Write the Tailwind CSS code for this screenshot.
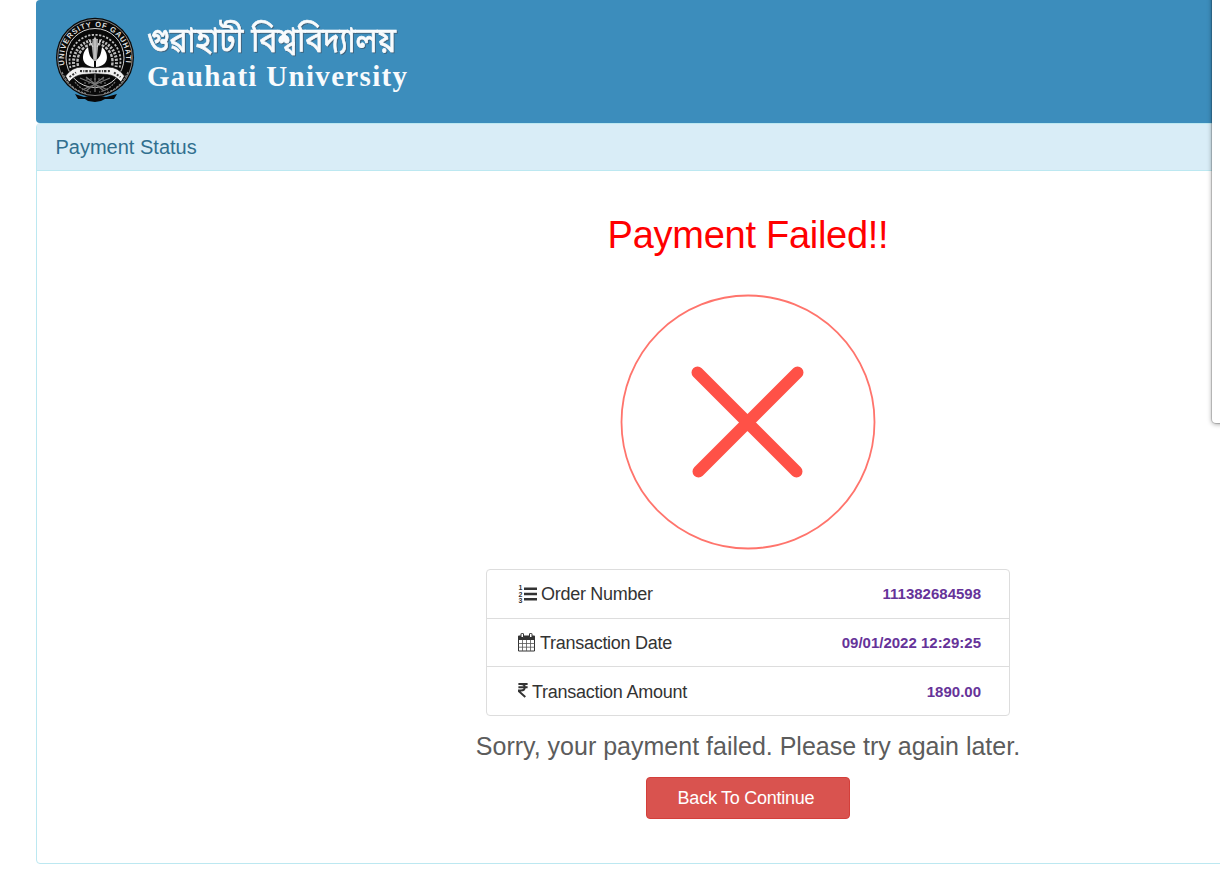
<!DOCTYPE html>
<html lang="en">
<head>
<meta charset="utf-8">
<title>Payment Status</title>
<script src="https://cdn.jsdelivr.net/npm/@tailwindcss/browser@4"></script>
</head>
<body class="h-[874px] overflow-hidden bg-white font-['Liberation_Sans',Arial,sans-serif] text-[#333]">
<div class="relative h-[874px] w-full overflow-hidden">
  <main class="ml-9 flex h-[864px] w-[1424px] flex-col">
    <header class="h-[123px] shrink-0 rounded bg-[#3c8dbc]">
      <svg class="block" width="400" height="123" viewBox="36 0 400 123" role="img" aria-label="Gauhati University">
        <defs>
          <path id="ring" d="M65.200 67 A31 31.500 0 1 1 124.800 67"/>
          <filter id="sh" x="-5%" y="-20%" width="110%" height="150%"><feDropShadow dx="1" dy="1" stdDeviation=".6" flood-color="#405568" flood-opacity=".75"/></filter>
        </defs>
        <path d="M75 94 L84 97 L95 95 L106 97 L117 94 L114 99 L105 99 L101 101 L95 102 L88 101 L85 99 L78 99Z" fill="#080808"/>
        <ellipse cx="95" cy="57.500" rx="39" ry="39.700" fill="#090909"/>
        <ellipse cx="95" cy="57.500" rx="37.300" ry="38" fill="none" stroke="#b6b6b6" stroke-width=".7"/>
        <ellipse cx="95" cy="58" rx="29" ry="29.500" fill="#080808" stroke="#d0d0d0" stroke-width="1"/>
        <text font-family="Liberation Sans, sans-serif" font-weight="700" font-size="7.500" fill="#ddd"><textPath href="#ring" startOffset="2" textLength="109">UNIVERSITY OF GAUHATI</textPath></text>
        <path d="M62 72 Q69 89 86 93.500 M128 72 Q121 89 104 93.500" fill="none" stroke="#8a8a8a" stroke-width="1.200" stroke-dasharray="2.500 1"/>
        <g fill="none" stroke="#bdbdbd">
          <path d="M70.500 68 A25.500 26 0 1 1 119.500 68" stroke-width="1.800" stroke-dasharray="2.200 1.500"/>
          <path d="M74 67 A21.500 22 0 1 1 116 67" stroke-width="3" stroke-dasharray="2 1.300"/>
          <path d="M78 66 A17.500 18 0 1 1 112 66" stroke-width="2.400" stroke-dasharray="3 1.300"/>
        </g>
        <ellipse cx="95" cy="58" rx="14" ry="13" fill="#0b0b0b"/>
        <path d="M88 47 C89 54 90 58 94 60 L94 67 C80 66 81 53 88 47Z M102 47 C101 54 100 58 96 60 L96 67 C110 66 109 53 102 47Z" fill="#fff"/>
        <path d="M95 36 L98.500 44 L96.500 61 L93.500 61 L91.500 44Z" fill="#a5a5a5"/>
        <path d="M88.500 39 L93 47 M101.500 39 L97 47 M95 38v21" stroke="#e0e0e0" fill="none" stroke-width=".9"/>
        <g fill="none" stroke="#777" stroke-width="1.200">
          <path d="M80 78 L108 90 M110 78 L82 90 M95 74 L95 92 M86 77 L104 91 M104 77 L86 91"/>
          <path d="M75 82 Q81 90 91 92 M115 82 Q109 90 99 92" stroke-dasharray="2 1"/>
          <path d="M86 79h18 M84 83h22 M86 87h18" stroke-dasharray="2 2"/>
        </g>
        <path d="M65.500 76 Q72 67 82 67 Q95 68.500 108 67 Q118 67 124.500 76 L121 82 Q115 75 107 74.500 Q95 73 83 74.500 Q75 75 69 82Z" fill="#f1f1f1" stroke="#111" stroke-width=".7"/>
        <path d="M69.500 77 L76 72.500 M114 72.500 L120.500 77" fill="none" stroke="#333" stroke-width="2" stroke-dasharray="2 1.500"/>
        <path d="M80 71 Q95 71.500 110 71" fill="none" stroke="#333" stroke-width="2.200" stroke-dasharray="2 1.300 1 1 2.500 1.500"/>
        <g filter="url(#sh)" fill="#f8fbfd">
          <text transform="translate(147 51.500) scale(1 1.160)" x="0" y="0" font-family="'Noto Sans Bengali', 'Noto Sans', sans-serif" font-size="30" textLength="249" lengthAdjust="spacingAndGlyphs" stroke="#f8fbfd" stroke-width=".6">গুৱাহাটী বিশ্ববিদ্যালয়</text>
        </g>
        <text x="147" y="85.500" font-family="'Liberation Serif', serif" font-weight="700" font-size="29" textLength="260" fill="#f8fbfd">Gauhati University</text>
      </svg>
    </header>
    <section class="flex grow flex-col rounded border border-[#bce8f1]">
      <h1 class="h-[47px] shrink-0 border-b border-[#bce8f1] bg-[#d9edf7] pl-[18.5px] text-[20px] leading-[46px] text-[#31708f]">Payment Status</h1>
      <div class="flex flex-col items-center">
        <h2 class="mt-[42px] text-[38px] leading-[44px] tracking-[-0.27px] text-[#f00]">Payment Failed!!</h2>
        <svg class="mt-[36px] block" width="258" height="258" viewBox="619 293 258 258">
          <circle cx="748" cy="422" r="126.500" fill="none" stroke="#ff5147" stroke-opacity=".8" stroke-width="1.800"/>
          <path d="M697.500 372.500 L796.500 471.500 M797.500 372.500 L698.500 471.500" stroke="#ff5147" stroke-width="12" stroke-linecap="round"/>
        </svg>
        <dl class="mt-[18px] flex h-[147px] w-[524px] flex-col divide-y divide-[#ddd] rounded border border-[#ddd]">
          <div class="flex flex-1 items-center justify-between pr-7 pl-[31px]">
            <dt class="flex items-center pt-0.5 text-[18px] tracking-[-0.28px]">
              <svg class="mr-1" width="19" height="20" viewBox="0 0 19 20" fill="#333"><path d="M6 2.500H19v2.500H6zM6 7.800H19v2.500H6zM6 13H19v2.500H6z"/><g font-family="Liberation Sans, sans-serif" font-weight="700" font-size="7"><text x="0.500" y="5">1</text><text x="0.500" y="11.500">2</text><text x="0.500" y="18">3</text></g></svg>
              Order Number</dt>
            <dd class="text-[15px] font-bold text-[#663399]">111382684598</dd>
          </div>
          <div class="flex flex-1 items-center justify-between pr-7 pl-[31px]">
            <dt class="flex items-center pt-px text-[18px] tracking-[-0.28px]">
              <svg class="mr-[5px] mb-px" width="17" height="19" viewBox="0 0 17 19"><path d="M.5 3.500h16v14.500H.5z" fill="#fff" stroke="#333"/><path d="M0 3.500q0-1 1-1h15q1 0 1 1V7H0z" fill="#333"/><path d="M.5 10.500h16M.5 14.200h16M4.500 7v11M8.500 7v11M12.500 7v11" stroke="#555" stroke-width=".8"/><path d="M3 1q0-.6.6-.6h1.300q.6 0 .6.6v3.500H3zM11.500 1q0-.6.6-.6h1.300q.6 0 .6.6v3.500h-2.500z" fill="#fff" stroke="#333"/></svg>
              Transaction Date</dt>
            <dd class="pt-px text-[15px] font-bold text-[#663399]">09/01/2022 12:29:25</dd>
          </div>
          <div class="flex flex-1 items-center justify-between pr-7 pl-[31px]">
            <dt class="flex items-center pt-0.5 text-[18px] tracking-[-0.25px]">
              <svg class="mr-1 mb-1" width="10" height="16" viewBox="0 0 10 16" fill="none" stroke="#333" stroke-width="2"><path d="M.4 1.900h9.200M.4 5.200h9.200M.4 1.900H3c5 0 5 6.500 0 6.500H.8v.8L7.300 15"/></svg>
              Transaction Amount</dt>
            <dd class="pt-0.5 text-[15px] font-bold text-[#663399]">1890.00</dd>
          </div>
        </dl>
        <p class="mt-[15px] text-[25px] leading-[30px] text-[#5c5c5c]">Sorry, your payment failed. Please try again later.</p>
        <button class="mt-4 h-[42px] w-[204px] rounded border border-[#d43f3a] bg-[#d9534f] pr-1 text-[18px] tracking-[-0.25px] text-white">Back To Continue</button>
      </div>
    </section>
  </main>
  <aside class="absolute -top-2 left-[1212px] h-[431px] w-20 rounded bg-white shadow-[0_1px_5px_rgba(0,0,0,0.4),0_0_0_1px_rgba(0,0,0,0.15)]"></aside>
</div>
</body>
</html>
